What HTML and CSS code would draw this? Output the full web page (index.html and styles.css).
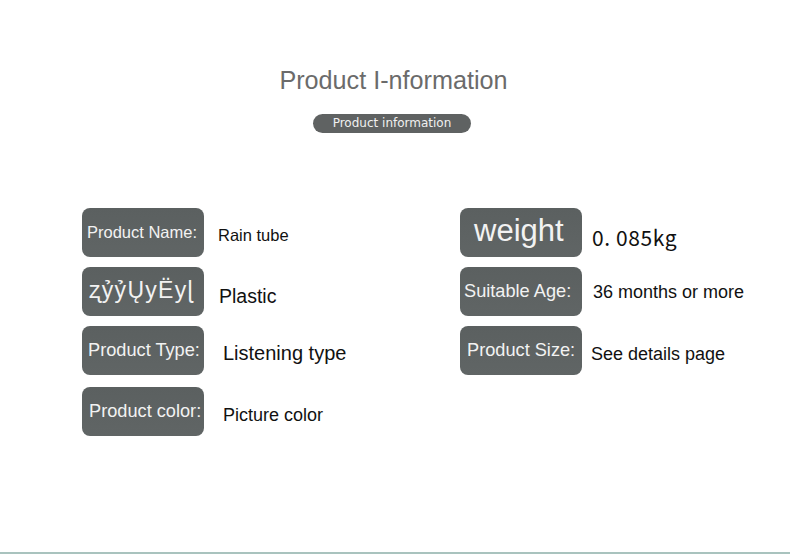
FILE: index.html
```html
<!DOCTYPE html>
<html lang="en">
<head>
<meta charset="utf-8">
<title>Product Information</title>
<link rel="stylesheet" href="styles.css">
</head>
<body>
<div class="page">
  <header class="head">
    <h1 class="title">Product I-nformation</h1>
    <div class="pill">Product information</div>
  </header>
  <section class="grid">
    <div class="col col-left">
      <div class="row">
        <div class="tag tag-name">Product Name:</div>
        <div class="val v-name">Rain tube</div>
      </div>
      <div class="row">
        <div class="tag tag-garbled">ʐỷỷŲyËyɭ</div>
        <div class="val v-mat">Plastic</div>
      </div>
      <div class="row">
        <div class="tag tag-lg tag-type">Product Type:</div>
        <div class="val v-type">Listening type</div>
      </div>
      <div class="row row-last">
        <div class="tag tag-lg tag-color">Product color:</div>
        <div class="val v-color">Picture color</div>
      </div>
    </div>
    <div class="col col-right">
      <div class="row">
        <div class="tag tag-big">weight</div>
        <div class="val v-weight">0. 085kg</div>
      </div>
      <div class="row">
        <div class="tag tag-lg tag-age">Suitable Age:</div>
        <div class="val v-age">36 months or more</div>
      </div>
      <div class="row">
        <div class="tag tag-lg tag-size">Product Size:</div>
        <div class="val v-size">See details page</div>
      </div>
    </div>
  </section>
</div>
</body>
</html>
```

FILE: styles.css
```css
html, body {
  margin: 0;
  padding: 0;
  background: #ffffff;
}

.page {
  height: 554px;
  box-sizing: border-box;
  border-bottom: 2px solid #a9c3be;
  font-family: "Liberation Sans", Arial, sans-serif;
  display: flex;
  flex-direction: column;
}

.head {
  display: flex;
  flex-direction: column;
  align-items: center;
  padding-top: 65px;
}

.title {
  margin: 0;
  font-size: 25.2px;
  line-height: 30px;
  font-weight: normal;
  color: #6b6b6b;
  padding-right: 3px;
}

.pill {
  margin-top: 19px;
  width: 158px;
  height: 19px;
  border-radius: 10px;
  background: #5f6262;
  color: #f0f0f0;
  font-family: "DejaVu Sans", sans-serif;
  font-size: 12px;
  line-height: 19px;
  text-align: center;
  margin-right: 6px;
}

.grid {
  display: grid;
  grid-template-columns: 378px auto;
  padding-left: 82px;
  margin-top: 75px;
}

.col {
  display: flex;
  flex-direction: column;
  gap: 10px;
}

.row {
  display: flex;
  align-items: center;
  height: 49px;
}

.row-last {
  margin-top: 2px;
}

.tag {
  width: 122px;
  height: 49px;
  flex: none;
  box-sizing: border-box;
  border-radius: 8px;
  background: linear-gradient(#5b6060, #606565);
  color: #f2f2f2;
  font-size: 16.5px;
  display: flex;
  align-items: center;
  justify-content: flex-start;
  padding-left: 5px;
  white-space: nowrap;
  overflow: hidden;
}

.tag-lg {
  font-size: 18.2px;
}

.tag-type { padding-left: 6px; }
.tag-color { padding-left: 7px; }
.tag-age { padding-left: 4px; }
.tag-size { padding-left: 7px; }

.tag-garbled {
  font-family: "Liberation Sans", "DejaVu Sans", sans-serif;
  font-size: 23px;
  letter-spacing: 1.3px;
  padding-left: 7px;
  padding-bottom: 2px;
}

.tag-big {
  font-size: 31px;
  padding-left: 14px;
  padding-bottom: 4px;
}

.val {
  color: #111111;
  white-space: nowrap;
  padding-top: 6px;
}

.v-name { font-size: 16.5px; margin-left: 14px; }
.v-mat { font-size: 19.5px; margin-left: 15px; padding-top: 10px; }
.v-type { font-size: 20px; margin-left: 19px; padding-top: 6px; }
.v-color { font-size: 18px; margin-left: 19px; padding-top: 8px; }

.col-right .val { margin-left: 10px; }

.v-weight {
  font-family: "Noto Sans CJK SC", "Noto Sans", sans-serif;
  font-size: 21px;
  letter-spacing: 0.6px;
  padding-top: 8px;
}
.v-age { font-size: 18px; margin-left: 11px !important; padding-top: 2px; }
.v-size { font-size: 18px; margin-left: 9px !important; padding-top: 8px; }
```
